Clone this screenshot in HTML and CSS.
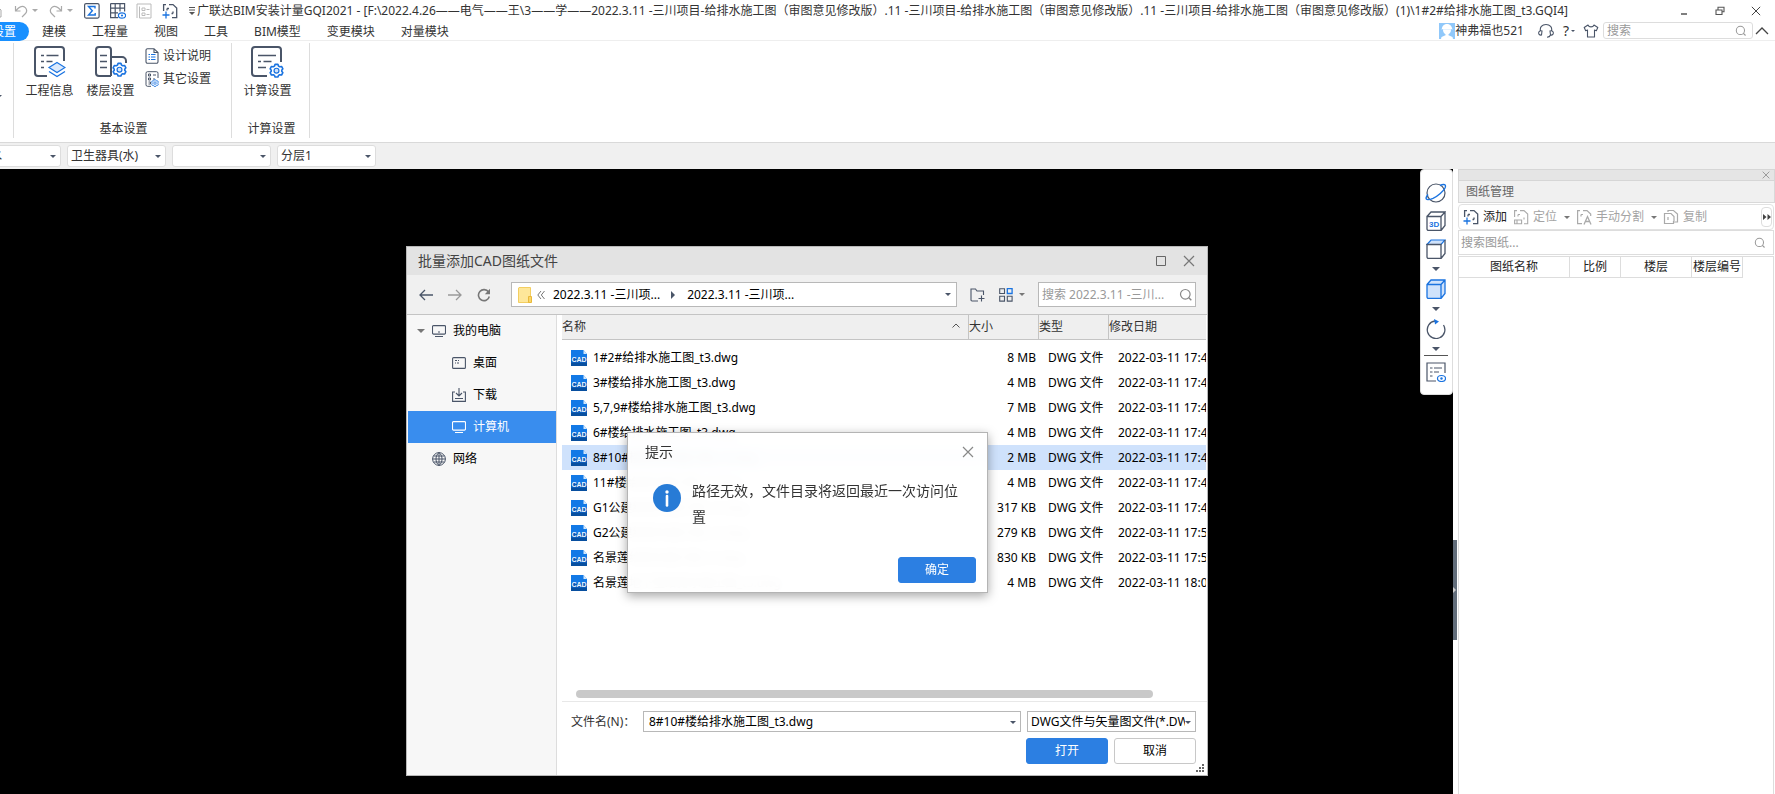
FILE: index.html
```html
<!DOCTYPE html>
<html lang="zh-CN">
<head>
<meta charset="utf-8">
<title>广联达BIM安装计量GQI2021</title>
<link rel="stylesheet" href="styles.css">
</head>
<body>
<svg class="sprite" aria-hidden="true">
  <symbol id="gear" viewBox="0 0 16 16">
    <path d="M6.500 1.500h3l.7 1.800 1.200.7 2-.3 1.400 2.500-1.200 1.600v.9l1.200 1.600-1.400 2.500-2-.3-1.200.7-.7 1.800h-3l-.7-1.800-1.200-.7-2 .3L1.200 10.300l1.200-1.600v-.9L1.200 6.200l1.400-2.500 2 .3 1.200-.7z" fill="#fff" stroke="#1a73e0" stroke-width="1.700" stroke-linejoin="round"/>
    <circle cx="8" cy="8.200" r="2.600" fill="#d2e4fb" stroke="#1a73e0" stroke-width="1.300"/>
  </symbol>
  <symbol id="cad" viewBox="0 0 16 16">
    <path d="M0 0h12.500l3.500 4v12H0z" fill="#1279e6"/>
    <path d="M0 8h16v8H0z" fill="#0a5cba"/>
    <path d="M0 13h16v3H0z" fill="#084f9f"/>
    <path d="M12.500 0v4H16z" fill="#d4e8fc"/>
    <text x="8" y="12" text-anchor="middle" class="cad-text">CAD</text>
  </symbol>
  <symbol id="search" viewBox="0 0 14 14">
    <circle cx="6.300" cy="6.300" r="4.800" fill="none" stroke="currentColor" stroke-width="1.200"/>
    <path d="M9.800 9.800l2.500 2.500" stroke="currentColor" stroke-width="1.400"/>
  </symbol>
  <symbol id="close" viewBox="0 0 12 12"><path d="M1 1l10 10M11 1L1 11" stroke="currentColor" stroke-width="1.200" fill="none"/></symbol>
  <symbol id="undo" viewBox="0 0 14 14"><path d="M1.500 2v5h5M2 6.500L4.500 4C7 1.800 9.500 2 11.300 3.600c2 2.200 1.500 4.600-.3 6.400L8 13" fill="none" stroke="currentColor" stroke-width="1.200"/></symbol>
</svg>

<header class="titlebar">
  <div class="quick">
    <button class="icon-btn home" aria-label="主页"><svg width="12" height="14" viewBox="0 0 12 14"><path d="M1 6l5-4.500L11 6v7H1zM8 8v5" fill="none" stroke="#aaa"/></svg></button>
    <button class="icon-btn faded" aria-label="撤销"><svg width="14" height="14"><use href="#undo"/></svg></button>
    <i class="caret light"></i>
    <button class="icon-btn faded flip" aria-label="恢复"><svg width="14" height="14"><use href="#undo"/></svg></button>
    <i class="caret light"></i>
    <button class="icon-btn" aria-label="汇总计算"><svg width="16" height="16" viewBox="0 0 16 16"><rect x=".6" y=".6" width="14.500" height="14.500" rx="1.500" fill="none" stroke="#4a5568" stroke-width="1.200"/><path d="M11 5.500V3.500H4.500L8.300 7.800 4.500 12h6.700v-2" fill="none" stroke="#1a73e0" stroke-width="1.400"/></svg></button>
    <button class="icon-btn" aria-label="报表"><svg width="16" height="16" viewBox="0 0 16 16"><path d="M.6 .6h14v8M.6 .6v14H8M.6 5.200h14M.6 9.800H8M5.200 .6v14M10 .6v8" fill="none" stroke="#4a5568" stroke-width="1.200"/><ellipse cx="12" cy="12.500" rx="3.600" ry="2.600" fill="#fff" stroke="#1a73e0" stroke-width="1.200"/><circle cx="12" cy="12.500" r="1.100" fill="#1a73e0"/></svg></button>
    <button class="icon-btn" aria-label="清单"><svg width="16" height="16" viewBox="0 0 16 16"><path d="M1 15V1h14v14H3.500V3.500M6 5h3v2.500H6zM6 10h3v2.500H6zM10.500 6.500h3M10.500 11.500h3" fill="none" stroke="#bbb"/></svg></button>
    <button class="icon-btn" aria-label="添加图纸"><svg width="16" height="16" viewBox="0 0 16 16"><path d="M1.600 8V1.600H4M7 1.600h4l3.700 3.500V14.700H10M5 5.500h2M5 5.500v2M11 10.500v-2M11 10.500H9.500" fill="none" stroke="#4a5568" stroke-width="1.300"/><path d="M4 8.500v7M.5 12h7" stroke="#1a73e0" stroke-width="1.300"/></svg></button>
    <button class="icon-btn more" aria-label="自定义快速访问"><svg width="6" height="8" viewBox="0 0 6 8"><path d="M0 .5h6M0 3h6" stroke="#555"/><path d="M0 5h6L3 8z" fill="#555"/></svg></button>
  </div>
  <h1 class="app-title">广联达BIM安装计量GQI2021 - [F:\2022.4.26——电气——王\3——学——2022.3.11 -三川项目-给排水施工图（审图意见修改版）.11 -三川项目-给排水施工图（审图意见修改版）.11 -三川项目-给排水施工图（审图意见修改版）(1)\1#2#给排水施工图_t3.GQI4]</h1>
  <div class="win-controls">
    <button class="icon-btn" aria-label="最小化"><svg width="10" height="10" viewBox="0 0 10 10"><path d="M2 8h6" stroke="#555" stroke-width="1.500"/></svg></button>
    <button class="icon-btn" aria-label="还原"><svg width="10" height="10" viewBox="0 0 10 10"><path d="M1 4h6v4.500H1zM3 3.500V1.200h6v4.600H7.500" fill="none" stroke="#555" stroke-width="1.100"/></svg></button>
    <button class="icon-btn dark" aria-label="关闭"><svg width="10" height="10"><use href="#close"/></svg></button>
  </div>
</header>

<nav class="tabs">
  <a class="tab active" href="#">工程设置</a>
  <a class="tab" href="#">建模</a>
  <a class="tab" href="#">工程量</a>
  <a class="tab" href="#">视图</a>
  <a class="tab" href="#">工具</a>
  <a class="tab" href="#">BIM模型</a>
  <a class="tab" href="#">变更模块</a>
  <a class="tab" href="#">对量模块</a>
  <div class="account">
    <svg width="16" height="16" viewBox="0 0 16 16"><rect width="16" height="16" fill="#90c8fa"/><path d="M3 5.500C3 3 5.500 1 8 1s5 2 5 4.500l1 .8H2zM4 6.500h8c0 2.500-1 4-2.500 4.800v1l4 1.700.5 2H2l.5-2 4-1.700v-1C5 10.500 4 9 4 6.500z" fill="#fff"/></svg>
    <span class="user">神弗福也521</span>
    <button class="icon-btn headset" aria-label="客服"><svg width="16" height="16" viewBox="0 0 16 16"><path d="M2.500 8C1.500 4.500 4 1.500 8 1.500S14.500 4.500 13.500 8M3.500 12C1.500 12.500 .5 11 .7 9.500 1 8 2.500 7.500 4 8zM12.500 12c2 .5 3-1 2.800-2.500C15 8 13.500 7.500 12 8l.5 4c-.5 1.500-1.500 2.200-3.500 2.200" fill="none" stroke="#4a5568" stroke-width="1.100"/></svg></button>
    <button class="icon-btn help" aria-label="帮助">?<i class="caret tiny"></i></button>
    <button class="icon-btn" aria-label="皮肤"><svg width="16" height="16" viewBox="0 0 16 16"><path d="M5 2L1.200 4.500l1.500 3.200 1.800-.7v7h7V7l1.800.7 1.500-3.200L11 2C10 4.500 6 4.500 5 2z" fill="none" stroke="#4a5568" stroke-width="1.100" stroke-linejoin="round"/></svg></button>
    <label class="top-search"><input type="text" placeholder="搜索" aria-label="搜索"><svg width="12" height="12"><use href="#search"/></svg></label>
    <button class="icon-btn" aria-label="折叠功能区"><svg width="14" height="8" viewBox="0 0 14 8"><path d="M1 7l6-6 6 6" fill="none" stroke="#444" stroke-width="1.300"/></svg></button>
  </div>
</nav>

<section class="ribbon">
  <div class="stub"><i class="caret"></i></div>
  <div class="group basic">
    <div class="group-body">
      <button class="big"><svg width="32" height="32" viewBox="0 0 32 32"><path d="M30 15V4a3 3 0 0 0-3-3H4a3 3 0 0 0-3 3v23a3 3 0 0 0 3 3h9" fill="none" stroke="#4a5568" stroke-width="2"/><path d="M7 9.500h3M12.500 9.500h12M7 15.500h3M12.500 15.500h6M7 21.500h3" stroke="#4a5568" stroke-width="1.700"/><path d="M23 16.500l8 5-8 5-8-5z" fill="#dceafc" stroke="#1a73e0" stroke-width="1.200"/><path d="M15 25.500l8 5 8-5" fill="none" stroke="#1a73e0" stroke-width="1.300"/></svg><span>工程信息</span></button>
      <button class="big"><svg width="32" height="32" viewBox="0 0 32 32"><path d="M16 30H4a3 3 0 0 1-3-3V4a3 3 0 0 1 3-3h9a3 3 0 0 1 3 3v26M16 11h11a4 4 0 0 1 4 4v2" fill="none" stroke="#4a5568" stroke-width="2"/><path d="M5 9.500h7M5 15.500h7M5 21.500h7" stroke="#4a5568" stroke-width="1.700"/><use href="#gear" x="17" y="16" width="15" height="15"/></svg><span>楼层设置</span></button>
      <div class="small-stack">
        <button class="small"><svg width="14" height="16" viewBox="0 0 14 16"><path d="M9 .7H2.500A1.500 1.500 0 0 0 1 2.200v11.600a1.500 1.500 0 0 0 1.500 1.500h9a1.500 1.500 0 0 0 1.500-1.500V4.500zV4.500H13" fill="none" stroke="#4a5568" stroke-width="1.100"/><path d="M3.500 6.500H5M6 6.500h4.500M3.500 9H5M6 9h4.500M3.500 11.500H5M6 11.500h4.500" stroke="#1a73e0"/></svg><span>设计说明</span></button>
        <button class="small"><svg width="14" height="16" viewBox="0 0 14 16"><path d="M13 7V2.200A1.500 1.500 0 0 0 11.500.7h-9A1.500 1.500 0 0 0 1 2.200v11.600a1.500 1.500 0 0 0 1.500 1.500H6M3.500 3h2v2h-2zM3.500 7h2v2h-2zM3.500 11h2v2h-2M8 4h3M8 8h2" fill="none" stroke="#4a5568"/><use href="#gear" x="6" y="8" width="8" height="8"/></svg><span>其它设置</span></button>
      </div>
    </div>
    <div class="group-name">基本设置</div>
  </div>
  <div class="group calc">
    <div class="group-body">
      <button class="big"><svg width="34" height="32" viewBox="0 0 34 32"><path d="M30 16V4a3 3 0 0 0-3-3H4a3 3 0 0 0-3 3v23a3 3 0 0 0 3 3h12" fill="none" stroke="#4a5568" stroke-width="2"/><path d="M7 9.500h18M7 15.500h3M12.500 15.500h8M7 21.500h8" stroke="#4a5568" stroke-width="1.700"/><use href="#gear" x="18" y="17" width="15" height="15"/></svg><span>计算设置</span></button>
    </div>
    <div class="group-name">计算设置</div>
  </div>
</section>

<div class="filters">
  <span class="pick"><select aria-label="专业"><option>给排水</option></select></span>
  <span class="pick"><select aria-label="构件类型"><option>卫生器具(水)</option></select></span>
  <span class="pick"><select aria-label="构件"><option></option></select></span>
  <span class="pick"><select aria-label="分层"><option>分层1</option></select></span>
</div>

<main class="workspace">
  <section class="canvas">
    <div class="view-tools">
      <button class="icon-btn" aria-label="动态观察"><svg width="22" height="20" viewBox="0 0 22 20"><circle cx="11" cy="10" r="9" fill="none" stroke="#4a5568" stroke-width="1.200"/><path d="M15 2.500c4-2 6.500-1 5 2.500-1.500 3-7 8-12 10.300-4 1.700-7.500 2-6.800-.8.300-1 1-2 1.800-3" fill="none" stroke="#1a73e0" stroke-width="1.400"/></svg></button>
      <button class="icon-btn" aria-label="三维"><svg width="20" height="20" viewBox="0 0 20 20"><path d="M1 5.500h14v14H2.500A1.500 1.500 0 0 1 1 18zM1 5.500L5 1h14l-4 4.500M19 1v13.500l-4 5" fill="none" stroke="#4a5568" stroke-width="1.300"/><text x="3" y="16" class="three-d">3D</text></svg></button>
      <button class="icon-btn" aria-label="俯视"><svg width="20" height="20" viewBox="0 0 20 20"><path d="M1 5.500L5 1h14l-4 4.500z" fill="#cfe2fb" stroke="#1a73e0" stroke-width="1.200"/><path d="M1 5.500h14v14H2.500A1.500 1.500 0 0 1 1 18zM19 1v13.500l-4 5" fill="none" stroke="#4a5568" stroke-width="1.300"/></svg></button>
      <i class="caret wide"></i>
      <button class="icon-btn" aria-label="实体显示"><svg width="20" height="20" viewBox="0 0 20 20"><path d="M1 5.500L5 1h14v13.500l-4 5H2.500A1.500 1.500 0 0 1 1 18zM1 5.500h14v14M15 5.500L19 1" fill="#cfe2fb" stroke="#1a73e0" stroke-width="1.300"/></svg></button>
      <i class="caret wide"></i>
      <button class="icon-btn" aria-label="旋转"><svg width="20" height="20" viewBox="0 0 20 20"><path d="M9 2A8.800 8.800 0 1 0 17.500 6" fill="none" stroke="#4a5568" stroke-width="1.300"/><path d="M8 0l5 2.500L9 5.500z" fill="#1a73e0"/></svg></button>
      <i class="caret wide"></i>
      <hr>
      <button class="icon-btn" aria-label="显示设置"><svg width="20" height="20" viewBox="0 0 20 20"><path d="M19 11V1H1v18h9M4 6h2.500M8 6h8M4 10h2.500M8 10h5M4 14h2.500" fill="none" stroke="#4a5568" stroke-width="1.200"/><ellipse cx="15.500" cy="16.500" rx="4" ry="3" fill="#fff" stroke="#1a73e0" stroke-width="1.200"/><circle cx="15.500" cy="16.500" r="1.200" fill="#1a73e0"/></svg></button>
    </div>

    <div class="dialog" role="dialog" aria-label="批量添加CAD图纸文件">
      <div class="dialog-title">
        <h2>批量添加CAD图纸文件</h2>
        <button class="icon-btn" aria-label="最大化"><svg width="10" height="10" viewBox="0 0 10 10"><path d="M.5 .5h9v9h-9z" fill="none" stroke="#666"/></svg></button>
        <button class="icon-btn" aria-label="关闭"><svg width="12" height="12"><use href="#close"/></svg></button>
      </div>
      <div class="navbar">
        <button class="icon-btn" aria-label="后退"><svg width="14" height="12" viewBox="0 0 14 12"><path d="M14 6H1.500M6 1L1 6l5 5" fill="none" stroke="#4a5568" stroke-width="1.300"/></svg></button>
        <button class="icon-btn" aria-label="前进"><svg width="14" height="12" viewBox="0 0 14 12"><path d="M0 6h12.500M8 1l5 5-5 5" fill="none" stroke="#999" stroke-width="1.300"/></svg></button>
        <button class="icon-btn" aria-label="刷新"><svg width="14" height="14" viewBox="0 0 14 14"><path d="M11.500 4A5.500 5.500 0 1 0 12.300 8.500" fill="none" stroke="#777" stroke-width="1.600"/><path d="M13 .8v5.400H7.800z" fill="#777"/></svg></button>
        <div class="path">
          <svg width="14" height="16" viewBox="0 0 14 16"><path d="M1 .5h11.500v15H.5V1z" fill="#fee79a" stroke="#f3ce61"/><path d="M10.500 9.500h3v6h-3z" fill="#fbd667" stroke="#e9b93a"/></svg>
          <svg class="back-more" width="8" height="8" viewBox="0 0 8 8"><path d="M4 0L.8 4 4 8M7.500 0L4.300 4l3.200 4" fill="none" stroke="#777"/></svg>
          <button class="crumb">2022.3.11 -三川项...</button>
          <i class="arrow-right"></i>
          <button class="crumb">2022.3.11 -三川项...</button>
          <i class="caret end"></i>
        </div>
        <button class="icon-btn folder" aria-label="新建文件夹"><svg width="15" height="14" viewBox="0 0 15 14"><path d="M8 13H2a1 1 0 0 1-1-1V1h4.500L7 3h6.500v4M11.500 7.500v6M8.500 10.500h6" fill="none" stroke="#4a5568" stroke-width="1.100"/></svg></button>
        <button class="icon-btn views" aria-label="视图"><svg width="14" height="14" viewBox="0 0 14 14"><path d="M.7 .7h4.800v4.800H.7zM.7 8.300h4.800v4.800H.7zM8.300 8.300h4.800v4.800H8.300z" fill="none" stroke="#4a5568" stroke-width="1.100"/><path d="M8.300 .7h4.800v4.800H8.300z" fill="none" stroke="#1a73e0" stroke-width="1.300"/></svg><i class="caret grey"></i></button>
        <label class="dir-search"><input type="text" placeholder="搜索 2022.3.11 -三川..." aria-label="搜索目录"><svg width="14" height="14"><use href="#search"/></svg></label>
      </div>
      <div class="dialog-body">
        <nav class="places">
          <a class="place root" href="#"><i class="caret wide grey"></i><svg width="14" height="12" viewBox="0 0 14 12"><path d="M1.500 .6h11a1 1 0 0 1 1 1v6.500a1 1 0 0 1-1 1h-11a1 1 0 0 1-1-1V1.600a1 1 0 0 1 1-1zM3 11.500h8M6 7h2" fill="none" stroke="#4a5568" stroke-width="1.100"/></svg>我的电脑</a>
          <a class="place child" href="#"><svg width="14" height="12" viewBox="0 0 14 12"><rect x=".6" y=".6" width="12.800" height="10.800" rx="1" fill="none" stroke="#4a5568" stroke-width="1.100"/><path d="M3 3.500h2M6 3.500h1M3 6h1M5 6h2" stroke="#4a5568" stroke-width="1.200"/></svg>桌面</a>
          <a class="place child" href="#"><svg width="14" height="14" viewBox="0 0 14 14"><path d="M3 4H.6v9.400h12.800V4H11M7 0v7.500M4 5l3 3 3-3M3 10.500h8" fill="none" stroke="#4a5568" stroke-width="1.100"/></svg>下载</a>
          <a class="place child current" href="#"><svg width="14" height="12" viewBox="0 0 14 12"><path d="M1.500 .6h11a1 1 0 0 1 1 1v6.500a1 1 0 0 1-1 1h-11a1 1 0 0 1-1-1V1.600a1 1 0 0 1 1-1zM3 11.500h8" fill="none" stroke="#fff" stroke-width="1.100"/></svg>计算机</a>
          <a class="place net" href="#"><svg width="14" height="14" viewBox="0 0 14 14"><path d="M7 .6a6.400 6.400 0 1 0 0 12.800A6.400 6.400 0 1 0 7 .6zC3 3 3 11 7 13.400 11 11 11 3 7 .6v12.800M.6 7h12.800M1.500 4h11M1.500 10h11" fill="none" stroke="#4a5568" stroke-width="1"/></svg>网络</a>
        </nav>
        <div class="files">
          <div class="list">
            <table>
              <colgroup><col><col class="c-size"><col class="c-type"><col class="c-date"></colgroup>
              <thead><tr><th><span class="sorted">名称<svg width="8" height="5" viewBox="0 0 8 5"><path d="M.5 4.500L4 1l3.500 3.500" fill="none" stroke="#555"/></svg></span></th><th>大小</th><th>类型</th><th>修改日期</th></tr></thead>
              <tbody>
                <tr><td><span class="file"><svg width="16" height="16"><use href="#cad"/></svg>1#2#给排水施工图_t3.dwg</span></td><td>8 MB</td><td>DWG 文件</td><td>2022-03-11 17:46</td></tr>
                <tr><td><span class="file"><svg width="16" height="16"><use href="#cad"/></svg>3#楼给排水施工图_t3.dwg</span></td><td>4 MB</td><td>DWG 文件</td><td>2022-03-11 17:46</td></tr>
                <tr><td><span class="file"><svg width="16" height="16"><use href="#cad"/></svg>5,7,9#楼给排水施工图_t3.dwg</span></td><td>7 MB</td><td>DWG 文件</td><td>2022-03-11 17:46</td></tr>
                <tr><td><span class="file"><svg width="16" height="16"><use href="#cad"/></svg>6#楼给排水施工图_t3.dwg</span></td><td>4 MB</td><td>DWG 文件</td><td>2022-03-11 17:46</td></tr>
                <tr class="selected"><td><span class="file"><svg width="16" height="16"><use href="#cad"/></svg>8#10#楼给排水施工图_t3.dwg</span></td><td>2 MB</td><td>DWG 文件</td><td>2022-03-11 17:46</td></tr>
                <tr><td><span class="file"><svg width="16" height="16"><use href="#cad"/></svg>11#楼给排水施工图_t3.dwg</span></td><td>4 MB</td><td>DWG 文件</td><td>2022-03-11 17:46</td></tr>
                <tr><td><span class="file"><svg width="16" height="16"><use href="#cad"/></svg>G1公建给排水施工图_t3.dwg</span></td><td>317 KB</td><td>DWG 文件</td><td>2022-03-11 17:46</td></tr>
                <tr><td><span class="file"><svg width="16" height="16"><use href="#cad"/></svg>G2公建给排水施工图_t3.dwg</span></td><td>279 KB</td><td>DWG 文件</td><td>2022-03-11 17:56</td></tr>
                <tr><td><span class="file"><svg width="16" height="16"><use href="#cad"/></svg>名景莲给排水施工图_t3.dwg</span></td><td>830 KB</td><td>DWG 文件</td><td>2022-03-11 17:56</td></tr>
                <tr><td><span class="file"><svg width="16" height="16"><use href="#cad"/></svg>名景莲地下室给排水施工图_t3.dwg</span></td><td>4 MB</td><td>DWG 文件</td><td>2022-03-11 18:06</td></tr>
              </tbody>
            </table>
          </div>
          <div class="scroll-thumb"></div>
          <div class="actions">
            <div class="name-row">
              <label for="fname">文件名(N)：</label>
              <span class="pick box grow"><input id="fname" type="text" value="8#10#楼给排水施工图_t3.dwg"></span>
              <span class="pick box kind"><select aria-label="文件类型"><option>DWG文件与矢量图文件(*.DWG)</option></select></span>
            </div>
            <div class="btn-row">
              <button class="btn primary">打开</button>
              <button class="btn">取消</button>
            </div>
            <svg class="grip" width="8" height="8" viewBox="0 0 8 8"><path d="M6 0h2v2H6zM3 3h2v2H3zM6 3h2v2H6zM0 6h2v2H0zM3 6h2v2H3zM6 6h2v2H6z" fill="#666"/></svg>
          </div>
        </div>
      </div>

      <div class="alert" role="alertdialog" aria-label="提示">
        <div class="alert-head"><h3>提示</h3><button class="icon-btn" aria-label="关闭提示"><svg width="12" height="12"><use href="#close"/></svg></button></div>
        <div class="alert-body">
          <svg width="28" height="28" viewBox="0 0 28 28"><circle cx="14" cy="14" r="14" fill="#277bd6"/><circle cx="14" cy="8" r="1.700" fill="#fff"/><path d="M14 12v9.500" stroke="#fff" stroke-width="2.600" stroke-linecap="round"/></svg>
          <p>路径无效，文件目录将返回最近一次访问位置</p>
        </div>
        <div class="alert-foot"><button class="btn primary ok">确定</button></div>
      </div>
    </div>
  </section>

  <div class="splitter"><button class="handle" aria-label="收起面板"></button></div>

  <aside class="panel">
    <div class="panel-strip"><button class="icon-btn" aria-label="关闭面板"><svg width="8" height="8"><use href="#close"/></svg></button></div>
    <h2 class="panel-title">图纸管理</h2>
    <div class="panel-tools">
      <button class="tool"><svg width="16" height="16" viewBox="0 0 16 16"><path d="M1.600 8V1.600H4M7 1.600h4l3.700 3.500V14.700H10M5 5.500h2M5 5.500v2M11 10.500v-2M11 10.500H9.500" fill="none" stroke="#4a5568" stroke-width="1.300"/><path d="M4 8.500v7M.5 12h7" stroke="#1a73e0" stroke-width="1.300"/></svg>添加</button>
      <button class="tool off"><svg width="16" height="16" viewBox="0 0 16 16"><path d="M1.600 8V1.600H4M7 1.600h4l3.700 3.500V14.700H11M5 5.500h2M5 5.500v2M11 10.500v-2M1.600 11h7v3.700h-7zM4 11v3.500" fill="none" stroke="#aaa" stroke-width="1.100"/></svg>定位<i class="caret grey"></i></button>
      <button class="tool off"><svg width="16" height="16" viewBox="0 0 16 16"><path d="M6 14.700H1.600V1.600H4M7 1.600h4l3.700 3.500V7M5 5.500h2M5 5.500v2" fill="none" stroke="#aaa" stroke-width="1.200"/><path d="M8 15.500l3.500-8 3.500 8M9.500 12.500h4" fill="none" stroke="#aaa" stroke-width="1.300"/></svg>手动分割<i class="caret grey"></i></button>
      <button class="tool off"><svg width="16" height="16" viewBox="0 0 16 16"><path d="M4 4.500H1.500v10h9V12M5 3V1.500h5.500l4 3.500v8H11M4 4.500h4l3 3V12M5 8v3" fill="none" stroke="#aaa" stroke-width="1.200"/></svg>复制</button>
      <button class="overflow" aria-label="更多工具"><svg width="8" height="6" viewBox="0 0 8 6"><path d="M0 0l3.500 3L0 6zM4.500 0L8 3 4.500 6z" fill="#444"/></svg></button>
    </div>
    <label class="panel-search"><input type="text" placeholder="搜索图纸..." aria-label="搜索图纸"><svg width="12" height="12"><use href="#search"/></svg></label>
    <div class="sheet">
      <table>
        <thead><tr><th class="w-name">图纸名称</th><th class="w-ratio">比例</th><th class="w-floor">楼层</th><th class="w-no">楼层编号</th></tr></thead>
      </table>
    </div>
  </aside>
</main>
</body>
</html>
```
FILE: styles.css
```css
* { box-sizing: border-box; }

body {
  margin: 0;
  min-height: 100vh;
  display: flex;
  flex-direction: column;
  overflow: hidden;
  background: #fff;
  color: #333;
  font: 12px/16px "Noto Sans", "Noto Sans CJK SC", sans-serif;
}

button, input, select {
  font: inherit;
  color: inherit;
  margin: 0;
  padding: 0;
  border: 0;
  background: none;
}

button { white-space: nowrap; }
a { color: inherit; text-decoration: none; }
h1, h2, h3, p { margin: 0; font-weight: 400; }
svg { display: block; flex: none; }
.sprite { position: absolute; width: 0; height: 0; }
input, select { min-width: 0; outline: 0; }
input::placeholder { color: #999; opacity: 1; }

.icon-btn { display: flex; align-items: center; flex: none; }
.icon-btn.dark { color: #444; }

.caret {
  flex: none;
  width: 0;
  height: 0;
  border: 3px solid transparent;
  border-top-color: #4a5568;
  border-bottom: 0;
}
.caret.light { border-top-color: #aaa; }
.caret.grey { border-top-color: #777; }
.caret.wide { border-width: 4px 4px 0; }
.caret.tiny { border-width: 2px 2px 0; }

.cad-text { font: bold 7px "Liberation Sans", sans-serif; fill: #f0f7ff; }
.three-d { font: bold 8px "Liberation Sans", sans-serif; fill: #1a73e0; }

/* title bar */
.titlebar {
  display: flex;
  align-items: center;
  height: 21px;
}
.quick {
  display: flex;
  align-items: center;
  gap: 10px;
  margin-left: -10px;
}
.quick .home { margin-right: 2px; }
.quick .caret { margin: 0 1px 0 -6px; }
.quick .more { margin: 0 2px 0 1px; }
.faded { color: #aaa; }
.quick .flip { transform: scaleX(-1); }
.app-title {
  flex: 1;
  font-size: 12px;
  white-space: nowrap;
}
.win-controls {
  display: flex;
  gap: 26px;
  padding-right: 14px;
}

/* ribbon tabs */
.tabs {
  display: flex;
  align-items: flex-end;
  height: 20px;
  border-bottom: 1px solid #eee;
}
.tab {
  margin-bottom: -1px;
  padding: 0 13px;
  line-height: 19px;
  white-space: nowrap;
}
.tab.active {
  margin-left: -45px;
  background: #1890ff;
  color: #fff;
  border-radius: 10px;
}
.account {
  display: flex;
  align-items: center;
  align-self: center;
  margin-left: auto;
  padding-right: 6px;
}
.headset { margin: 0 9px 0 14px; }
.help { margin-right: 8px; gap: 2px; font-size: 14px; }
.top-search {
  display: flex;
  align-items: center;
  width: 150px;
  height: 17px;
  margin: 0 2px 0 4px;
  padding: 0 5px 0 3px;
  border: 1px solid #ddd;
  border-radius: 3px;
  color: #999;
}
.top-search input { flex: 1; }

/* ribbon */
.ribbon {
  display: flex;
  height: 101px;
  padding: 2px 0 4px;
}
.stub {
  width: 14px;
  padding-top: 56px;
  border-right: 1px solid #ddd;
}
.stub .caret { margin-left: -4px; }
.group {
  display: flex;
  flex-direction: column;
  justify-content: space-between;
  padding-bottom: 1px;
  border-right: 1px solid #ddd;
}
.group-body { display: flex; }
.basic { width: 218px; padding-left: 5px; }
.calc { width: 78px; padding-left: 5px; }
.big {
  display: flex;
  flex-direction: column;
  align-items: center;
  gap: 5px;
  width: 61px;
  padding-top: 3px;
}
.small-stack {
  display: flex;
  flex-direction: column;
  gap: 7px;
  padding: 5px 0 0 4px;
}
.small { display: flex; align-items: center; gap: 4px; }
.group-name { padding-right: 3px; text-align: center; }

/* filter combos */
.filters {
  display: flex;
  gap: 6px;
  height: 27px;
  padding: 2px 0;
  margin-left: -38px;
  background: #f0f0f0;
  border-top: 1px solid #d9d9d9;
}
.pick {
  position: relative;
  display: flex;
  width: 99px;
  height: 22px;
  background: #fff;
  border: 1px solid #ddd;
  border-radius: 3px;
}
.pick::after {
  content: "";
  position: absolute;
  top: 9px;
  right: 4px;
  border: 3px solid transparent;
  border-top-color: #4a5568;
  border-bottom: 0;
}
.pick select, .pick input {
  appearance: none;
  width: 100%;
  padding: 0 10px 0 3px;
}

/* workspace */
.workspace { flex: 1; display: flex; }
.canvas {
  position: relative;
  flex: 1;
  background: #000;
}
.view-tools {
  position: absolute;
  top: 0;
  right: 0;
  display: flex;
  flex-direction: column;
  align-items: center;
  gap: 8px;
  width: 33px;
  padding: 13px 1px 12px 0;
  background: #fff;
  border: 1px solid #ddd;
  border-radius: 4px;
}
.view-tools hr {
  width: 24px;
  height: 1px;
  margin: -4px 0 -2px;
  border: 0;
  background: #555;
}

/* file dialog */
.dialog {
  position: absolute;
  left: 406px;
  top: 77px;
  width: 802px;
  background: #fff;
  border: 1px solid #b8b8b8;
}
.dialog-title {
  display: flex;
  align-items: center;
  gap: 17px;
  height: 28px;
  padding: 0 12px 0 11px;
  background: #e3e3e3;
  color: #777;
}
.dialog-title h2 { flex: 1; font-size: 14px; line-height: 20px; color: #444; }
.navbar {
  display: flex;
  align-items: center;
  gap: 15px;
  height: 40px;
  padding: 0 11px 0 12px;
  background: #f0f0f0;
  border-bottom: 1px solid #c4c4c4;
}
.path {
  flex: 1;
  display: flex;
  align-items: center;
  height: 25px;
  margin-left: 5px;
  padding: 0 5px 0 6px;
  background: #fff;
  border: 1px solid #b8b8b8;
  color: #000;
}
.back-more { margin: 0 8px 0 5px; }
.arrow-right {
  margin: 0 12px 0 11px;
  border: 4px solid transparent;
  border-left-color: #4a5568;
  border-right: 0;
}
.path .end { margin-left: auto; }
.folder { margin: 0 -1px 0 -2px; }
.views { gap: 6px; margin-right: -2px; }
.dir-search {
  display: flex;
  align-items: center;
  width: 158px;
  height: 25px;
  padding: 0 2px 0 3px;
  background: #fff;
  border: 1px solid #b8b8b8;
  color: #888;
}
.dir-search input { flex: 1; }
.dialog-body { display: flex; }

.places {
  width: 150px;
  padding-left: 1px;
  background: #f7f7f7;
  border-right: 1px solid #ddd;
  color: #000;
}
.place {
  display: flex;
  align-items: center;
  gap: 7px;
  height: 32px;
}
.root { padding-left: 9px; }
.child { padding-left: 44px; }
.net { padding-left: 24px; }
.current { background: #398dee; color: #fff; }

.files {
  flex: 1;
  min-width: 0;
  padding-left: 5px;
}
.list { min-height: 375px; padding-right: 1px; overflow: hidden; }
.list table {
  width: 100%;
  table-layout: fixed;
  border-collapse: separate;
  border-spacing: 0;
}
.c-size, .c-type { width: 70px; }
.c-date { width: 98px; }
.list th {
  height: 25px;
  padding: 0;
  background: #efefef;
  border-bottom: 1px solid #c4c4c4;
  font-weight: 400;
  text-align: left;
}
.list th + th { border-left: 1px solid #c4c4c4; }
.sorted { display: flex; justify-content: space-between; padding-right: 8px; }
.sorted svg { margin-top: 4px; }
.list tbody { color: #000; }
.list tbody::before { content: ""; display: block; height: 5px; }
.list td {
  height: 25px;
  padding: 0 0 0 10px;
  overflow: hidden;
  white-space: nowrap;
}
.list td:first-child { padding-left: 9px; }
.list td:nth-child(2) { padding: 0 2px 0 0; text-align: right; }
.file { display: flex; align-items: center; gap: 6px; }
.selected td { background: #cfe2fc; }

.scroll-thumb {
  height: 8px;
  margin: 0 54px 3px 14px;
  border-radius: 4px;
  background: #c9c9c9;
}
.actions {
  position: relative;
  padding: 9px 11px 11px 9px;
  border-top: 1px solid #e8e8e8;
}
.name-row { display: flex; align-items: center; gap: 6px; }
.name-row label { width: 66px; white-space: nowrap; }
.box { height: 21px; border-color: #b8b8b8; border-radius: 0; color: #000; }
.grow { flex: 1; }
.grow input { padding-left: 5px; }
.kind { width: 169px; }
.btn-row {
  display: flex;
  justify-content: flex-end;
  gap: 6px;
  margin-top: 6px;
}
.btn {
  width: 82px;
  height: 26px;
  background: #fff;
  border: 1px solid #c8c8c8;
  border-radius: 3px;
  color: #000;
}
.btn.primary { background: #2c7fe2; border-color: #2c7fe2; color: #fff; }
.grip { position: absolute; right: 3px; bottom: 3px; }

/* message box */
.alert {
  position: absolute;
  left: 220px;
  top: 185px;
  width: 361px;
  padding-bottom: 9px;
  background: rgba(255, 255, 255, .96);
  backdrop-filter: blur(6px);
  border: 1px solid #b4b4b4;
  box-shadow: 0 3px 10px rgba(0, 0, 0, .35);
}
.alert-head {
  display: flex;
  align-items: center;
  justify-content: space-between;
  height: 37px;
  padding: 0 13px 0 17px;
  color: #888;
}
.alert-head h3 { font-size: 14px; line-height: 20px; color: #333; }
.alert-body {
  display: flex;
  align-items: flex-start;
  gap: 11px;
  padding: 8px 26px 0 25px;
}
.alert-body svg { margin-top: 6px; }
.alert-body p { font-size: 14px; line-height: 26px; }
.alert-foot {
  display: flex;
  justify-content: flex-end;
  padding: 27px 11px 0 0;
}
.ok { width: 78px; }

/* splitter */
.splitter {
  display: flex;
  align-items: center;
  width: 5px;
  padding-top: 217px;
}
.handle {
  width: 4px;
  height: 100px;
  background: #626d7a;
}
.handle::before {
  content: "";
  display: block;
  width: 0;
  border: 3px solid transparent;
  border-left-color: #ccc;
  border-right: 0;
}

/* drawing panel */
.panel {
  display: flex;
  flex-direction: column;
  width: 317px;
}
.panel-strip {
  display: flex;
  justify-content: flex-end;
  height: 12px;
  padding-right: 4px;
  background: #e5e5e5;
  border: 1px solid #d6d6d6;
  color: #888;
}
.panel-title {
  height: 22px;
  padding-left: 7px;
  background: #f0f0f0;
  border: 1px solid #d9d9d9;
  border-top: 0;
  font-size: 12px;
  line-height: 21px;
  color: #666;
}
.panel-tools {
  display: flex;
  align-items: center;
  gap: 6px;
  height: 26px;
  margin: 1px 1px 0 0;
  padding: 0 1px 0 4px;
  border: 1px solid #e2e2e2;
  border-radius: 4px;
}
.tool { display: flex; align-items: center; gap: 4px; color: #222; }
.tool.off { color: #a4a4a4; }
.tool .caret { margin-left: 3px; }
.overflow {
  display: flex;
  align-items: center;
  justify-content: center;
  width: 11px;
  height: 20px;
  margin-left: auto;
  border: 1px solid #ddd;
  border-radius: 4px;
}
.panel-search {
  display: flex;
  align-items: center;
  height: 25px;
  margin-right: 1px;
  padding: 0 7px 0 2px;
  border: 1px solid #ddd;
  color: #999;
}
.panel-search input { flex: 1; }
.sheet {
  flex: 1;
  margin: 1px 1px 0 0;
  border: 1px solid #ddd;
  border-bottom: 0;
}
.sheet table { border-collapse: separate; border-spacing: 0; table-layout: fixed; width: 284px; }
.sheet th {
  height: 21px;
  padding: 0;
  border: solid #ddd;
  border-width: 0 1px 1px 0;
  font-weight: 400;
  color: #222;
  white-space: nowrap;
}
.w-name { width: 111px; }
.w-ratio, .w-no { width: 51px; }
.w-floor { width: 71px; }
```
